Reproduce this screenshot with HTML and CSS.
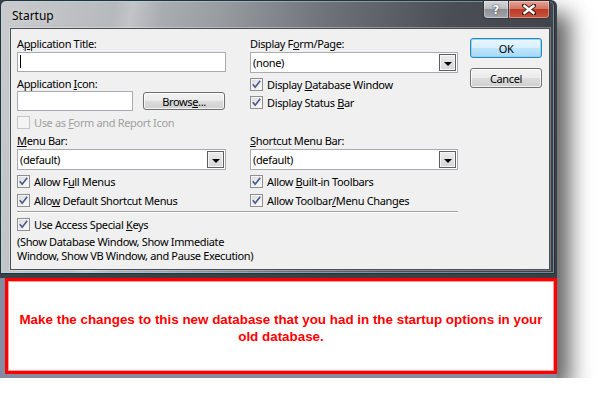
FILE: index.html
```html
<!DOCTYPE html>
<html>
<head>
<meta charset="utf-8">
<title>Startup</title>
<link rel="stylesheet" href="styles.css">
</head>
<body>
<div class="shot">
  <div class="window">
    <div class="titlebar">
      <span class="title">Startup</span>
      <div class="caption">
        <div class="cap-btn help"><span>?</span></div>
        <div class="cap-btn close">
          <svg width="14" height="11" viewBox="0 0 14 11"><path d="M2 1.5 L12 9.5 M12 1.5 L2 9.5" stroke="#3a1a14" stroke-width="4.2" stroke-linecap="square"/><path d="M2.5 2 L11.5 9 M11.5 2 L2.5 9" stroke="#fff" stroke-width="2.4" stroke-linecap="square"/></svg>
        </div>
      </div>
    </div>
    <div class="client">
      <div class="main">
        <div class="grid">
          <div class="col">
            <div class="label">A<u>p</u>plication Title:</div>
            <div class="textbox"><span class="caret"></span></div>
            <div class="label gap4">Application <u>I</u>con:</div>
            <div class="iconrow">
              <div class="textbox short"></div>
              <div class="btn browse">Brows<u>e</u>...</div>
            </div>
            <div class="check disabled gap5"><span class="box"></span><span>Use as <u>F</u>orm and Report Icon</span></div>
          </div>
          <div class="col">
            <div class="label">Display F<u>o</u>rm/Page:</div>
            <div class="combo"><span class="val">(none)</span><span class="drop"><i></i></span></div>
            <div class="check gap5"><span class="box"><svg width="11" height="11" viewBox="0 0 11 11"><path d="M1.8 5.2 L4.2 8.2 L9.2 1.8" fill="none" stroke="#4a5b8c" stroke-width="1.7"/></svg></span><span>Display <u>D</u>atabase Window</span></div>
            <div class="check gap5"><span class="box"><svg width="11" height="11" viewBox="0 0 11 11"><path d="M1.8 5.2 L4.2 8.2 L9.2 1.8" fill="none" stroke="#4a5b8c" stroke-width="1.7"/></svg></span><span>Display Status <u>B</u>ar</span></div>
          </div>
          <div class="col">
            <div class="label"><u>M</u>enu Bar:</div>
            <div class="combo"><span class="val">(default)</span><span class="drop"><i></i></span></div>
            <div class="check gap5"><span class="box"><svg width="11" height="11" viewBox="0 0 11 11"><path d="M1.8 5.2 L4.2 8.2 L9.2 1.8" fill="none" stroke="#4a5b8c" stroke-width="1.7"/></svg></span><span>Allow F<u>u</u>ll Menus</span></div>
            <div class="check gap6"><span class="box"><svg width="11" height="11" viewBox="0 0 11 11"><path d="M1.8 5.2 L4.2 8.2 L9.2 1.8" fill="none" stroke="#4a5b8c" stroke-width="1.7"/></svg></span><span>Allo<u>w</u> Default Shortcut Menus</span></div>
          </div>
          <div class="col">
            <div class="label"><u>S</u>hortcut Menu Bar:</div>
            <div class="combo"><span class="val">(default)</span><span class="drop"><i></i></span></div>
            <div class="check gap5"><span class="box"><svg width="11" height="11" viewBox="0 0 11 11"><path d="M1.8 5.2 L4.2 8.2 L9.2 1.8" fill="none" stroke="#4a5b8c" stroke-width="1.7"/></svg></span><span>Allow <u>B</u>uilt-in Toolbars</span></div>
            <div class="check gap6"><span class="box"><svg width="11" height="11" viewBox="0 0 11 11"><path d="M1.8 5.2 L4.2 8.2 L9.2 1.8" fill="none" stroke="#4a5b8c" stroke-width="1.7"/></svg></span><span>Allow Toolbar<u>/</u>Menu Changes</span></div>
          </div>
        </div>
        <div class="sep"></div>
        <div class="check gap5"><span class="box"><svg width="11" height="11" viewBox="0 0 11 11"><path d="M1.8 5.2 L4.2 8.2 L9.2 1.8" fill="none" stroke="#4a5b8c" stroke-width="1.7"/></svg></span><span>Use Access Special <u>K</u>eys</span></div>
        <div class="hint">(Show Database Window, Show Immediate<br>Window, Show VB Window, and Pause Execution)</div>
      </div>
      <div class="buttons">
        <div class="btn ok">OK</div>
        <div class="btn cancel">Cancel</div>
      </div>
    </div>
  </div>
  <div class="note"><p>Make the changes to this new database that you had in the startup options in your old database.</p></div>
</div>
</body>
</html>
```

FILE: styles.css
```css
html, body {
  margin: 0;
  padding: 0;
  background: #fff;
}
body {
  font-family: "Noto Sans", "Open Sans", sans-serif;
  font-size: 11px;
  letter-spacing: -0.35px;
  color: #000;
}
.shot {
  width: 557px;
  height: 378px;
  background: linear-gradient(#3b4048 0, #3b4048 278px, #858ba0 278px);
  box-shadow: 13px 13px 22px rgba(0, 0, 0, 0.62);
  border-top-right-radius: 6px;
  display: flex;
  flex-direction: column;
}
.window {
  width: 555px;
  height: 274px;
  box-sizing: border-box;
  border: 1px solid #2c3036;
  border-radius: 6px 6px 0 0;
  background:
    linear-gradient(100deg, transparent 19%, rgba(255,255,255,0.22) 22%, transparent 27%),
    linear-gradient(100deg, #c9cbcd 0%, #b8bbbe 18%, #9a9ea3 36%, #6e7278 55%, #4b4f55 75%, #3c4046 100%);
  box-shadow: inset 0 0 0 1px rgba(160, 230, 245, 0.45);
  display: flex;
  flex-direction: column;
}
.titlebar {
  height: 27px;
  display: flex;
  justify-content: space-between;
  align-items: flex-start;
}
.title {
  margin: 7px 0 0 11px;
  font-size: 12px;
  letter-spacing: 0;
  line-height: 15px;
  color: #000;
  text-shadow: 0 0 6px rgba(255,255,255,0.7);
}
.caption {
  display: flex;
  margin-right: 4px;
}
.cap-btn {
  height: 18px;
  box-sizing: border-box;
  border: 1px solid #34383e;
  border-top: none;
  display: flex;
  align-items: center;
  justify-content: center;
  box-shadow: inset 0 0 0 1px rgba(255,255,255,0.35);
}
.help {
  width: 25px;
  border-right: none;
  border-bottom-left-radius: 4px;
  background: linear-gradient(#d3d6d9 0%, #b7bbbf 48%, #8d9197 50%, #a3a7ad 100%);
}
.help span {
  font-family: "DejaVu Sans", sans-serif;
  font-weight: bold;
  font-size: 12px;
  letter-spacing: 0;
  line-height: 12px;
  color: #fff;
  text-shadow: 0 0 1px #333, 0 0 2px #555;
}
.close {
  width: 42px;
  border-bottom-right-radius: 4px;
  background: linear-gradient(#e6a396 0%, #d27462 46%, #bb3c27 50%, #c9543c 100%);
}
.client {
  margin-left: 9px;
  width: 540px;
  height: 242px;
  box-sizing: border-box;
  border: 1px solid #4a4e55;
  box-shadow: 0 0 0 1px rgba(255,255,255,0.3);
  background: #f0f0f0;
  padding: 7px 7px 0 6px;
  display: flex;
}
.main {
  width: 441px;
  display: flex;
  flex-direction: column;
}
.grid {
  display: grid;
  grid-template-columns: 209px 208px;
  column-gap: 24px;
  row-gap: 4px;
  align-items: start;
}
.col {
  display: flex;
  flex-direction: column;
}
.label {
  height: 15px;
  line-height: 15px;
  white-space: nowrap;
}
.gap4 { margin-top: 4px; }
.gap5 { margin-top: 5px; }
.gap6 { margin-top: 6px; }
.textbox {
  margin-top: 1px;
  height: 20px;
  box-sizing: border-box;
  border: 1px solid #a9abb0;
  background: #fff;
  padding: 2px 0 0 2px;
}
.caret {
  display: block;
  width: 1px;
  height: 13px;
  background: #000;
}
.iconrow {
  display: flex;
  align-items: center;
  height: 20px;
}
.iconrow .textbox {
  margin-top: 0;
}
.textbox.short {
  width: 116px;
}
.btn {
  box-sizing: border-box;
  border: 1px solid #707070;
  border-radius: 3px;
  background: linear-gradient(#f3f3f3 0%, #ebebeb 48%, #dddddd 50%, #cfcfcf 100%);
  box-shadow: inset 0 0 0 1px rgba(255,255,255,0.75);
  display: flex;
  align-items: center;
  justify-content: center;
  line-height: 15px;
}
.browse {
  margin-left: 10px;
  width: 82px;
  height: 18px;
}
.combo {
  margin-top: 1px;
  height: 21px;
  box-sizing: border-box;
  border: 1px solid #a9abb0;
  background: #fff;
  display: flex;
  align-items: center;
  justify-content: space-between;
}
.combo .val {
  padding-left: 2px;
  line-height: 15px;
}
.drop {
  width: 17px;
  height: 17px;
  margin-right: 1px;
  box-sizing: border-box;
  border: 1px solid #5f5f5f;
  background: linear-gradient(#ececec, #d6d6d6);
  box-shadow: inset 0 0 0 1px #f6f6f6;
  display: flex;
  align-items: center;
  justify-content: center;
}
.drop i {
  display: block;
  margin-top: 2px;
  width: 0;
  height: 0;
  border-left: 4px solid transparent;
  border-right: 4px solid transparent;
  border-top: 4px solid #000;
}
.check {
  height: 13px;
  display: flex;
  align-items: center;
  gap: 4px;
  white-space: nowrap;
  line-height: 15px;
}
.box {
  width: 13px;
  height: 13px;
  flex: none;
  box-sizing: border-box;
  border: 1px solid #8e8f8f;
  background: linear-gradient(135deg, #d8d8d8 0%, #f0f0f0 60%, #fcfcfc 100%);
  box-shadow: inset 0 0 0 1px #f4f4f4;
  display: flex;
  align-items: center;
  justify-content: center;
}
.box svg {
  display: block;
}
.check.disabled {
  color: #a0a0a0;
}
.check.disabled .box {
  border-color: #c6c6c6;
  background: #f4f4f4;
  box-shadow: none;
}
.sep {
  margin-top: 4px;
  height: 1px;
  background: #a0a0a0;
  border-bottom: 1px solid #ffffff;
}
.hint {
  margin-top: 4px;
  line-height: 14px;
  white-space: nowrap;
}
.buttons {
  margin-left: 12px;
  width: 72px;
  display: flex;
  flex-direction: column;
}
.buttons .btn {
  height: 20px;
}
.ok {
  margin-top: 2px;
  border-color: #3c7fb1;
  background: linear-gradient(#eaf6fd 0%, #d9f0fc 48%, #bee6fd 50%, #a7d9f5 100%);
  box-shadow: inset 0 0 0 1px rgba(120, 220, 250, 0.9);
}
.cancel {
  margin-top: 10px;
}
.note {
  margin: 4px 0 0 5px;
  width: 552px;
  height: 96px;
  box-sizing: border-box;
  border: 3px solid #ff0000;
  box-shadow: inset 0 0 0 1px #ff9c9c;
  background: #fff;
  display: flex;
  align-items: center;
  justify-content: center;
  padding: 3px 10px 0;
}
.note p {
  margin: 0;
  text-align: center;
  font-family: "Liberation Sans", Arial, sans-serif;
  font-weight: bold;
  font-size: 13.4px;
  letter-spacing: 0;
  line-height: 17px;
  color: #ff0000;
}
```
